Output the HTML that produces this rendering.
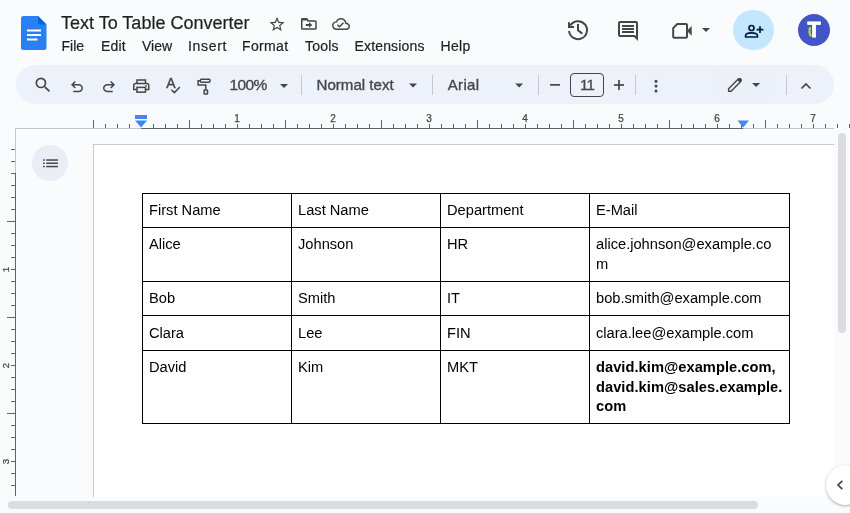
<!DOCTYPE html>
<html lang="en">
<head>
<meta charset="utf-8">
<title>Text To Table Converter</title>
<style>
*{box-sizing:border-box;margin:0;padding:0}
html,body{width:850px;height:513px;overflow:hidden;background:#f9fbfd;font-family:"Liberation Sans",sans-serif;color:#1f1f1f}
.abs{position:absolute}
#root{will-change:transform;position:relative;width:850px;height:513px;overflow:hidden;background:#f9fbfd}
.title{-webkit-text-stroke:0.200px #1f1f1f;left:61px;top:11px;font-size:18px;line-height:24px;color:#1f1f1f;white-space:nowrap}
.menu{-webkit-text-stroke:0.200px #1f1f1f;top:37px;font-size:14px;line-height:18px;color:#1f1f1f;white-space:nowrap}
#toolbar{left:16px;top:65px;width:818px;height:40px}
#tbbg{left:16px;top:64.500px;width:818px;height:39.500px;border-radius:20px;background:#edf2fa}
.tbt{-webkit-text-stroke:0.350px #444746;position:absolute;font-size:15px;line-height:18px;color:#444746;white-space:nowrap}
.sep{position:absolute;width:1px;height:20px;top:10px;background:#c7c7c7}
#page{left:93px;top:144px;width:741px;height:353px;background:#fff;border-top:1px solid #c8c8c8;border-left:1px solid #c8c8c8}
#hband{left:0;top:497px;width:850px;height:16px;background:#f9fbfd}
table{position:absolute;left:142px;top:193px;width:648px;border-collapse:collapse;table-layout:fixed;font-size:14.667px;line-height:19.5px;color:#000}
td{border:1px solid #000;vertical-align:top;padding:7px 6px 6px 6px;white-space:nowrap}
.r4 td{padding-top:8px}
svg text{font-family:"Liberation Sans",sans-serif}
#icons{left:0;top:0;pointer-events:none}
.st{fill:none;stroke:#444746;stroke-width:1.5}
.fl{fill:#444746}
</style>
</head>
<body>
<div id="root">

<!-- header: docs logo -->
<svg class="abs" style="left:21px;top:16px" width="26" height="34" viewBox="0 0 26 34">
  <path d="M2.500 0H17L25.500 8.500V31.500A2.500 2.500 0 0 1 23 34H2.500A2.500 2.500 0 0 1 0 31.500V2.500A2.500 2.500 0 0 1 2.500 0Z" fill="#2a80f2"/>
  <path d="M17 0L25.500 8.500H19.500A2.500 2.500 0 0 1 17 6Z" fill="#0066da"/>
  <rect x="6" y="13.500" width="14" height="2" fill="#fff"/>
  <rect x="6" y="18" width="14" height="2" fill="#fff"/>
  <rect x="6" y="22.500" width="10.500" height="2" fill="#fff"/>
</svg>
<div class="abs title">Text To Table Converter</div>

<div class="abs menu" style="left:61.500px">File</div>
<div class="abs menu" style="left:101px;letter-spacing:0.150px">Edit</div>
<div class="abs menu" style="left:142px">View</div>
<div class="abs menu" style="left:188px;letter-spacing:0.700px">Insert</div>
<div class="abs menu" style="left:242px;letter-spacing:0.350px">Format</div>
<div class="abs menu" style="left:305px;letter-spacing:0.200px">Tools</div>
<div class="abs menu" style="left:354.500px;letter-spacing:0.160px">Extensions</div>
<div class="abs menu" style="left:440.500px;letter-spacing:0.350px">Help</div>

<!-- share + avatar -->
<div class="abs" style="left:733.200px;top:10px;width:40.400px;height:40px;border-radius:20px;background:#c2e7ff"></div>
<div class="abs" style="left:798px;top:14px;width:32px;height:32px;border-radius:16px;background:#4355c4"></div>
<div class="abs" style="left:798px;top:14px;width:32px;height:32px;line-height:32px;text-align:center;font-weight:bold;font-size:21.500px;padding-top:0px;color:#fff;-webkit-text-stroke:0.800px #fff">T</div>

<!-- toolbar -->
<div id="tbbg" class="abs"></div>
<div id="toolbar" class="abs">
  <div class="tbt" style="left:213.500px;top:11.200px;font-size:15.500px;letter-spacing:-0.600px">100%</div>
  <div class="sep" style="left:285px"></div>
  <div class="tbt" style="left:300.500px;top:11px;font-size:15.100px">Normal text</div>
  <div class="sep" style="left:416px"></div>
  <div class="tbt" style="left:431.800px;top:11px;letter-spacing:0.300px">Arial</div>
  <div class="sep" style="left:522px"></div>
  <div class="abs" style="left:554px;top:8px;width:34px;height:24px;border:1px solid #444746;border-radius:4px"></div>
  <div class="tbt" style="left:554.500px;top:11px;width:34px;text-align:center;letter-spacing:-0.800px;text-indent:-0.800px">11</div>
  <div class="sep" style="left:619px"></div>
  <div class="abs" style="left:696px;top:2px;width:62px;height:36px;border-radius:18px;background:#ebf0f9"></div>
  <div class="sep" style="left:770px"></div>
</div>

<!-- page -->
<div id="page" class="abs"></div>
<div id="hband" class="abs"></div>
<!-- outline button -->
<div class="abs" style="left:32px;top:145px;width:36px;height:36px;border-radius:18px;background:#e9edf6"></div>
<!-- scrollbars -->
<div class="abs" style="left:838px;top:133px;width:8px;height:200px;border-radius:4px;background:#dadce0"></div>
<div class="abs" style="left:8px;top:501px;width:750px;height:8px;border-radius:4px;background:#dadce0"></div>
<!-- side panel toggle -->
<div class="abs" style="left:826px;top:465px;width:40px;height:40px;border-radius:20px;background:#fff;box-shadow:0 1px 3px rgba(60,64,67,.3),0 1px 2px rgba(60,64,67,.15)"></div>

<table>
<colgroup><col style="width:149px"><col style="width:149px"><col style="width:149px"><col style="width:200px"></colgroup>
<tr style="height:34px"><td>First Name</td><td>Last Name</td><td>Department</td><td>E-Mail</td></tr>
<tr style="height:54px"><td>Alice</td><td>Johnson</td><td>HR</td><td>alice.johnson@example.co<br>m</td></tr>
<tr style="height:34px"><td>Bob</td><td>Smith</td><td>IT</td><td>bob.smith@example.com</td></tr>
<tr class="r4" style="height:35px"><td>Clara</td><td>Lee</td><td>FIN</td><td>clara.lee@example.com</td></tr>
<tr style="height:73px"><td>David</td><td>Kim</td><td>MKT</td><td><b style="letter-spacing:0.040px">david.kim@example.com,<br>david.kim@sales.example.<br>com</b></td></tr>
</table>

<!-- all icons + rulers in absolute pixel coordinates -->
<svg id="icons" class="abs" width="850" height="513" viewBox="0 0 850 513">
<rect x="15" y="128" width="819" height="1" fill="#c4c7c5"/>
<rect x="141" y="128" width="602" height="1" fill="#5f6368"/>
<rect x="93" y="120" width="1" height="8" fill="#5f6368"/>
<rect x="105" y="124" width="1" height="4" fill="#5f6368"/>
<rect x="117" y="124" width="1" height="4" fill="#5f6368"/>
<rect x="129" y="124" width="1" height="4" fill="#5f6368"/>
<rect x="153" y="124" width="1" height="4" fill="#5f6368"/>
<rect x="165" y="124" width="1" height="4" fill="#5f6368"/>
<rect x="177" y="124" width="1" height="4" fill="#5f6368"/>
<rect x="189" y="120" width="1" height="8" fill="#5f6368"/>
<rect x="201" y="124" width="1" height="4" fill="#5f6368"/>
<rect x="213" y="124" width="1" height="4" fill="#5f6368"/>
<rect x="225" y="124" width="1" height="4" fill="#5f6368"/>
<rect x="237" y="124" width="1" height="4" fill="#5f6368"/>
<text x="237" y="122" text-anchor="middle" font-size="10" fill="#444746" stroke="#444746" stroke-width=".25">1</text>
<rect x="249" y="124" width="1" height="4" fill="#5f6368"/>
<rect x="261" y="124" width="1" height="4" fill="#5f6368"/>
<rect x="273" y="124" width="1" height="4" fill="#5f6368"/>
<rect x="285" y="120" width="1" height="8" fill="#5f6368"/>
<rect x="297" y="124" width="1" height="4" fill="#5f6368"/>
<rect x="309" y="124" width="1" height="4" fill="#5f6368"/>
<rect x="321" y="124" width="1" height="4" fill="#5f6368"/>
<rect x="333" y="124" width="1" height="4" fill="#5f6368"/>
<text x="333" y="122" text-anchor="middle" font-size="10" fill="#444746" stroke="#444746" stroke-width=".25">2</text>
<rect x="345" y="124" width="1" height="4" fill="#5f6368"/>
<rect x="357" y="124" width="1" height="4" fill="#5f6368"/>
<rect x="369" y="124" width="1" height="4" fill="#5f6368"/>
<rect x="381" y="120" width="1" height="8" fill="#5f6368"/>
<rect x="393" y="124" width="1" height="4" fill="#5f6368"/>
<rect x="405" y="124" width="1" height="4" fill="#5f6368"/>
<rect x="417" y="124" width="1" height="4" fill="#5f6368"/>
<rect x="429" y="124" width="1" height="4" fill="#5f6368"/>
<text x="429" y="122" text-anchor="middle" font-size="10" fill="#444746" stroke="#444746" stroke-width=".25">3</text>
<rect x="441" y="124" width="1" height="4" fill="#5f6368"/>
<rect x="453" y="124" width="1" height="4" fill="#5f6368"/>
<rect x="465" y="124" width="1" height="4" fill="#5f6368"/>
<rect x="477" y="120" width="1" height="8" fill="#5f6368"/>
<rect x="489" y="124" width="1" height="4" fill="#5f6368"/>
<rect x="501" y="124" width="1" height="4" fill="#5f6368"/>
<rect x="513" y="124" width="1" height="4" fill="#5f6368"/>
<rect x="525" y="124" width="1" height="4" fill="#5f6368"/>
<text x="525" y="122" text-anchor="middle" font-size="10" fill="#444746" stroke="#444746" stroke-width=".25">4</text>
<rect x="537" y="124" width="1" height="4" fill="#5f6368"/>
<rect x="549" y="124" width="1" height="4" fill="#5f6368"/>
<rect x="561" y="124" width="1" height="4" fill="#5f6368"/>
<rect x="573" y="120" width="1" height="8" fill="#5f6368"/>
<rect x="585" y="124" width="1" height="4" fill="#5f6368"/>
<rect x="597" y="124" width="1" height="4" fill="#5f6368"/>
<rect x="609" y="124" width="1" height="4" fill="#5f6368"/>
<rect x="621" y="124" width="1" height="4" fill="#5f6368"/>
<text x="621" y="122" text-anchor="middle" font-size="10" fill="#444746" stroke="#444746" stroke-width=".25">5</text>
<rect x="633" y="124" width="1" height="4" fill="#5f6368"/>
<rect x="645" y="124" width="1" height="4" fill="#5f6368"/>
<rect x="657" y="124" width="1" height="4" fill="#5f6368"/>
<rect x="669" y="120" width="1" height="8" fill="#5f6368"/>
<rect x="681" y="124" width="1" height="4" fill="#5f6368"/>
<rect x="693" y="124" width="1" height="4" fill="#5f6368"/>
<rect x="705" y="124" width="1" height="4" fill="#5f6368"/>
<rect x="717" y="124" width="1" height="4" fill="#5f6368"/>
<text x="717" y="122" text-anchor="middle" font-size="10" fill="#444746" stroke="#444746" stroke-width=".25">6</text>
<rect x="729" y="124" width="1" height="4" fill="#5f6368"/>
<rect x="741" y="124" width="1" height="4" fill="#5f6368"/>
<rect x="753" y="124" width="1" height="4" fill="#5f6368"/>
<rect x="765" y="120" width="1" height="8" fill="#5f6368"/>
<rect x="777" y="124" width="1" height="4" fill="#5f6368"/>
<rect x="789" y="124" width="1" height="4" fill="#5f6368"/>
<rect x="801" y="124" width="1" height="4" fill="#5f6368"/>
<rect x="813" y="124" width="1" height="4" fill="#5f6368"/>
<text x="813" y="122" text-anchor="middle" font-size="10" fill="#444746" stroke="#444746" stroke-width=".25">7</text>
<rect x="825" y="124" width="1" height="4" fill="#5f6368"/>
<rect x="837" y="124" width="1" height="4" fill="#5f6368"/>
<rect x="849" y="124" width="1" height="4" fill="#5f6368"/>
<rect x="15" y="128" width="1" height="368" fill="#c4c7c5"/>
<rect x="15" y="173" width="1" height="323" fill="#5f6368"/>
<rect x="11" y="149" width="4" height="1" fill="#5f6368"/>
<rect x="11" y="161" width="4" height="1" fill="#5f6368"/>
<rect x="11" y="173" width="4" height="1" fill="#5f6368"/>
<rect x="11" y="185" width="4" height="1" fill="#5f6368"/>
<rect x="11" y="197" width="4" height="1" fill="#5f6368"/>
<rect x="11" y="209" width="4" height="1" fill="#5f6368"/>
<rect x="7" y="221" width="8" height="1" fill="#5f6368"/>
<rect x="11" y="233" width="4" height="1" fill="#5f6368"/>
<rect x="11" y="245" width="4" height="1" fill="#5f6368"/>
<rect x="11" y="257" width="4" height="1" fill="#5f6368"/>
<rect x="11" y="269" width="4" height="1" fill="#5f6368"/>
<text transform="translate(8.6 269.5)  rotate(-90)" text-anchor="middle" font-size="9.6" fill="#444746" stroke="#444746" stroke-width=".25">1</text>
<rect x="11" y="281" width="4" height="1" fill="#5f6368"/>
<rect x="11" y="293" width="4" height="1" fill="#5f6368"/>
<rect x="11" y="305" width="4" height="1" fill="#5f6368"/>
<rect x="7" y="317" width="8" height="1" fill="#5f6368"/>
<rect x="11" y="329" width="4" height="1" fill="#5f6368"/>
<rect x="11" y="341" width="4" height="1" fill="#5f6368"/>
<rect x="11" y="353" width="4" height="1" fill="#5f6368"/>
<rect x="11" y="365" width="4" height="1" fill="#5f6368"/>
<text transform="translate(8.6 365.5)  rotate(-90)" text-anchor="middle" font-size="9.6" fill="#444746" stroke="#444746" stroke-width=".25">2</text>
<rect x="11" y="377" width="4" height="1" fill="#5f6368"/>
<rect x="11" y="389" width="4" height="1" fill="#5f6368"/>
<rect x="11" y="401" width="4" height="1" fill="#5f6368"/>
<rect x="7" y="413" width="8" height="1" fill="#5f6368"/>
<rect x="11" y="425" width="4" height="1" fill="#5f6368"/>
<rect x="11" y="437" width="4" height="1" fill="#5f6368"/>
<rect x="11" y="449" width="4" height="1" fill="#5f6368"/>
<rect x="11" y="461" width="4" height="1" fill="#5f6368"/>
<text transform="translate(8.6 461.5)  rotate(-90)" text-anchor="middle" font-size="9.6" fill="#444746" stroke="#444746" stroke-width=".25">3</text>
<rect x="11" y="473" width="4" height="1" fill="#5f6368"/>
<rect x="11" y="485" width="4" height="1" fill="#5f6368"/>
<!-- ruler markers -->
<rect x="135" y="115" width="12" height="4" fill="#4285f4"/>
<path d="M135 120.500H147L141 127.500Z" fill="#4285f4"/>
<path d="M737.500 120.500H749L743.200 127.500Z" fill="#4285f4"/>

<!-- star -->
<svg x="268" y="15.300" width="18" height="18" viewBox="0 0 24 24"><path class="fl" d="M22 9.240l-7.190-.620L12 2 9.190 8.630 2 9.240l5.460 4.730L5.820 21 12 17.270 18.180 21l-1.630-7.030L22 9.240zM12 15.400l-3.760 2.270 1-4.280-3.320-2.880 4.380-.380L12 6.100l1.710 4.040 4.380.380-3.320 2.880 1 4.280L12 15.400z"/></svg>
<!-- folder move -->
<path class="st" d="M301.750 28.200V19.700A.900.900 0 0 1 302.650 18.800H306.600L308.300 20.900H315.100A.900.900 0 0 1 316 21.800V28.200A.900.900 0 0 1 315.100 29.100H302.650A.900.900 0 0 1 301.750 28.200Z"/>
<path class="fl" d="M301.500 18.200H307L308.600 20.600H301.500Z"/>
<path class="fl" d="M305.800 24.100H309V22.200L312.300 25L309 27.800V25.900H305.800Z"/>
<!-- cloud done -->
<svg x="332" y="15.100" width="18" height="18" viewBox="0 0 24 24"><path class="fl" d="M19.350 10.040C18.670 6.590 15.640 4 12 4 9.110 4 6.600 5.640 5.350 8.040 2.340 8.360 0 10.910 0 14c0 3.310 2.690 6 6 6h13c2.760 0 5-2.240 5-5 0-2.640-2.050-4.780-4.650-4.960zM19 18H6c-2.210 0-4-1.790-4-4 0-2.050 1.530-3.760 3.560-3.970l1.070-.110.500-.950C8.080 7.140 9.940 6 12 6c2.620 0 4.880 1.860 5.390 4.430l.300 1.500 1.530.110c1.560.100 2.780 1.410 2.780 2.960 0 1.650-1.350 3-3 3zm-9-3.820l-2.090-2.090L6.500 13.500 10 17l6.010-6.010-1.410-1.410z"/></svg>

<!-- history -->
<path d="M570.300 25.500A9 9 0 1 1 569.050 31" fill="none" stroke="#444746" stroke-width="2"/>
<path d="M569 22.300V27.100H574" fill="none" stroke="#444746" stroke-width="2"/>
<path d="M578 24V30.300L582.300 33.600" fill="none" stroke="#444746" stroke-width="2"/>
<!-- comment -->
<svg x="616" y="19" width="24" height="24" viewBox="0 0 24 24"><path class="fl" d="M21.990 4c0-1.100-.890-2-1.990-2H4c-1.100 0-2 .900-2 2v12c0 1.100.900 2 2 2h14l4 4-.010-18zM20 4v13.170L18.830 16H4V4h16zM6 12h12v2H6zm0-3h12v2H6zm0-3h12v2H6z"/></svg>
<!-- camera -->
<path d="M673.200 28.100L677.300 24H686A1 1 0 0 1 687 25V36.800A1 1 0 0 1 686 37.800H674.200A1 1 0 0 1 673.200 36.800Z" fill="none" stroke="#444746" stroke-width="2" stroke-linejoin="round"/>
<path class="fl" d="M686.800 30.800L691.700 26V35.800Z"/>
<path class="fl" d="M702 28H710L706 32Z"/>
<!-- person add -->
<g fill="none" stroke="#001d35" stroke-width="1.700">
<circle cx="751.500" cy="28" r="2.500"/>
<path d="M745.600 37V35.600C745.600 33.600 749.500 32.900 751.500 32.900S757.400 33.600 757.400 35.600V37Z" stroke-linejoin="round"/>
<path d="M756.600 29.700H763.400M760 26.300V33.100"/>
</g>
<!-- avatar squiggle -->
<path d="M810 28.200C809.200 30.500 809.400 33.500 810.500 35.300" fill="none" stroke="#c5d935" stroke-width="2.300" stroke-linecap="round" stroke-dasharray="1.800 1.400"/>

<!-- toolbar icons -->
<svg x="33" y="75" width="20" height="20" viewBox="0 0 24 24"><path class="fl" d="M15.500 14h-.790l-.280-.270A6.471 6.471 0 0 0 16 9.500 6.500 6.500 0 1 0 9.500 16c1.610 0 3.090-.590 4.230-1.570l.270.280v.790l5 4.990L20.490 19l-4.990-5zm-6 0C7.010 14 5 11.990 5 9.500S7.010 5 9.500 5 14 7.010 14 9.500 11.990 14 9.500 14z"/></svg>
<!-- undo -->
<svg x="68" y="78" width="18" height="18" viewBox="0 -960 960 960"><path class="fl" d="M280-200v-80h284q63 0 109.500-40T720-420q0-60-46.500-100T564-560H312l104 104-56 56-200-200 200-200 56 56-104 104h252q97 0 166.500 63T800-420q0 94-69.500 157T564-200H280Z"/></svg>
<!-- redo -->
<svg x="100" y="78" width="18" height="18" viewBox="0 -960 960 960"><path class="fl" transform="translate(960 0) scale(-1 1)" d="M280-200v-80h284q63 0 109.500-40T720-420q0-60-46.500-100T564-560H312l104 104-56 56-200-200 200-200 56 56-104 104h252q97 0 166.500 63T800-420q0 94-69.500 157T564-200H280Z"/></svg>
<!-- print -->
<path class="st" d="M137 83.500V80H145.500V83.500"/>
<path class="st" d="M136.500 89.500H133.750V85.500A2 2 0 0 1 135.750 83.500H146.750A2 2 0 0 1 148.750 85.500V89.500H146"/>
<rect class="st" x="136.950" y="87.400" width="8.500" height="4.750"/>
<circle class="fl" cx="146" cy="85.900" r=".800"/>
<!-- spellcheck -->
<text x="170.800" y="87.700" font-size="14" text-anchor="middle" fill="#444746" stroke="#444746" stroke-width=".4">A</text>
<path class="st" d="M171.300 89.800L174.400 92.600L179.900 87"/>
<!-- paint format -->
<rect class="st" x="200.450" y="79.250" width="9.500" height="2.900" rx=".800"/>
<path class="st" d="M200.450 80.700H198.150V85.100H205.800V89.500"/>
<rect class="st" x="204.100" y="89.900" width="3.400" height="4.200" rx=".600"/>
<!-- dropdown arrows -->
<path class="fl" d="M280 84H288L284 88Z"/>
<path class="fl" d="M409 83.500H417L413 87.500Z"/>
<path class="fl" d="M515.200 83.500H523.200L519.200 87.500Z"/>
<!-- minus / plus -->
<rect class="fl" x="550" y="84" width="10" height="1.700"/>
<rect class="fl" x="614" y="84.150" width="10" height="1.700"/>
<rect class="fl" x="618.150" y="80" width="1.700" height="10"/>
<!-- more vert -->
<circle class="fl" cx="656" cy="81.200" r="1.500"/><circle class="fl" cx="656" cy="86.100" r="1.500"/><circle class="fl" cx="656" cy="91" r="1.500"/>
<!-- pencil -->
<path d="M728.600 91.200V88.700L738.500 78.800L741 81.300L731.100 91.200Z" fill="none" stroke="#444746" stroke-width="1.400" stroke-linejoin="round"/>
<path class="fl" d="M737.200 80.100L739.300 78A.900.900 0 0 1 740.500 78L741.800 79.300A.900.900 0 0 1 741.800 80.500L739.700 82.600Z"/>
<path class="fl" d="M752 83H760.200L756.100 87.100Z"/>
<!-- collapse chevron -->
<path d="M801.500 88.500L806 84L810.500 88.500" fill="none" stroke="#444746" stroke-width="1.700"/>
<!-- outline icon -->
<g class="fl">
<rect x="46.200" y="159.300" width="11.800" height="1.500"/><rect x="46.200" y="162.500" width="11.800" height="1.500"/><rect x="46.200" y="165.800" width="11.800" height="1.500"/>
<rect x="43" y="159.300" width="1.700" height="1.500"/><rect x="43" y="162.500" width="1.700" height="1.500"/><rect x="43" y="165.800" width="1.700" height="1.500"/>
</g>
<!-- side chevron -->
<path d="M842.300 480.800L838 485L842.300 489.200" fill="none" stroke="#444746" stroke-width="1.700"/>
</svg>

</div>
</body>
</html>
